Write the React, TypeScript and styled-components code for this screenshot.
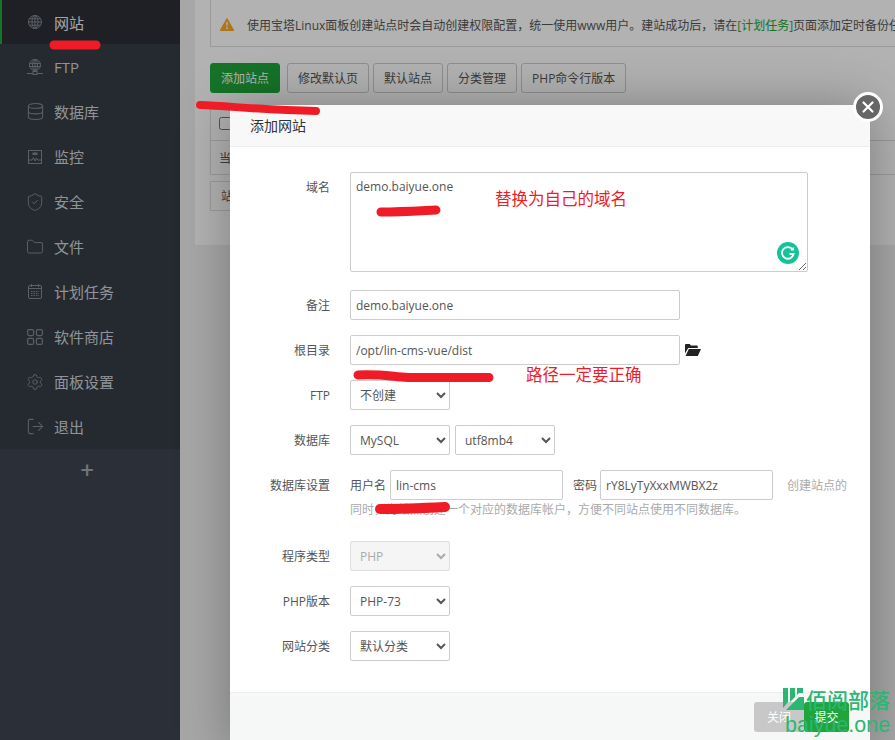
import { FC, ReactNode } from 'react';
import styled, { createGlobalStyle } from 'styled-components';
import { Database, Folder, LogOut, Settings, ShieldCheck } from 'lucide-react';

const FONT = '"Open Sans", "Noto Sans CJK SC", sans-serif';

const GlobalStyle = createGlobalStyle`
  html, body {
    margin: 0;
    padding: 0;
    width: 895px;
    height: 740px;
    overflow: hidden;
    font-family: ${FONT};
    font-size: 12px;
    color: #555;
  }
  * {
    box-sizing: border-box;
  }
`;

const GlobeIcon = () => (
  <svg width="14" height="14" viewBox="0 0 14 14" fill="none" stroke="currentColor" strokeWidth="1">
    <circle cx="7" cy="7" r="6.500" />
    <ellipse cx="7" cy="7" rx="3" ry="6.500" />
    <path d="M7 .5v13M1.500 3.800h11M.5 7h13M1.500 10.200h11" />
  </svg>
);

const FtpIcon = () => (
  <svg width="16" height="16" viewBox="0 0 16 16" fill="none" stroke="currentColor" strokeWidth="1">
    <circle cx="8" cy="6" r="5.500" />
    <ellipse cx="8" cy="6" rx="2.500" ry="5.500" />
    <path d="M2.500 4.500h11M2.500 7.500h11M8 .5v11M0 14.500h6M10 14.500h6" />
    <rect x="6" y="12.500" width="4" height="3" />
  </svg>
);

const MonitorIcon = () => (
  <svg width="14" height="14" viewBox="0 0 14 14" fill="none" stroke="currentColor" strokeWidth="1">
    <rect x=".5" y=".5" width="13" height="13" />
    <path d="M1 10h3l1.500-2.500L7 11l1.500-3 1 2H13" />
    <rect x="4.500" y="2.500" width="5" height="2.500" fill="currentColor" stroke="none" />
  </svg>
);

const CalendarIcon = () => (
  <svg width="14" height="15" viewBox="0 0 14 15" fill="none" stroke="currentColor" strokeWidth="1">
    <rect x=".5" y="1.500" width="13" height="13" rx="1.500" />
    <path d="M3.500 0v3M10.500 0v3M.5 4.500h13" />
    <path d="M3 7.500h8M3 9.500h8M3 11.500h8" strokeDasharray="1.500 1" />
  </svg>
);

const GridIcon = () => (
  <svg width="16" height="16" viewBox="0 0 16 16" fill="none" stroke="currentColor" strokeWidth="1.200">
    <rect x=".6" y=".6" width="6" height="6" rx="1.500" />
    <rect x="9.400" y=".6" width="6" height="6" rx="1.500" />
    <rect x=".6" y="9.400" width="6" height="6" rx="1.500" />
    <rect x="9.400" y="9.400" width="6" height="6" rx="1.500" />
  </svg>
);

const WarningIcon = () => (
  <svg width="14" height="13" viewBox="0 0 14 13">
    <path d="M7 .5l6.800 12H.2z" fill="#f9a825" stroke="#f9a825" strokeLinejoin="round" />
    <path d="M6.200 4h1.600l-.3 4.500h-1zM6.200 9.500h1.600v1.600H6.200z" fill="#fff" />
  </svg>
);

const FolderOpenIcon = () => (
  <svg width="16" height="12" viewBox="0 0 16 12" fill="#222">
    <path d="M0 1.200C0 .5.500 0 1.200 0h3.600l1 1.500h5.900c.6 0 1 .4 1 1V4H3.200L0 9.500z" />
    <path d="M3.800 5H16l-3.200 7H.6z" />
  </svg>
);

const navItems: { label: string; icon: ReactNode; active?: boolean }[] = [
  { label: '网站', icon: <GlobeIcon />, active: true },
  { label: 'FTP', icon: <FtpIcon /> },
  { label: '数据库', icon: <Database size={19} strokeWidth={1.300} /> },
  { label: '监控', icon: <MonitorIcon /> },
  { label: '安全', icon: <ShieldCheck size={20} strokeWidth={1.200} /> },
  { label: '文件', icon: <Folder size={18} strokeWidth={1.300} /> },
  { label: '计划任务', icon: <CalendarIcon /> },
  { label: '软件商店', icon: <GridIcon /> },
  { label: '面板设置', icon: <Settings size={18} strokeWidth={1.300} /> },
  { label: '退出', icon: <LogOut size={19} strokeWidth={1.300} /> },
];

const toolbarButtons = ['修改默认页', '默认站点', '分类管理', 'PHP命令行版本'];

const Field: FC<{ label: string; children: ReactNode }> = ({ label, children }) => (
  <Row>
    <RowLabel>{label}</RowLabel>
    <RowControls>{children}</RowControls>
  </Row>
);

const App: FC = () => (
  <Page>
    <GlobalStyle />
    <Sidebar>
      {navItems.map(item => (
        <NavItem key={item.label} $active={item.active}>
          <NavIcon>{item.icon}</NavIcon>
          {item.label}
        </NavItem>
      ))}
      <AddMenu>+</AddMenu>
    </Sidebar>
    <Main>
      <Panel>
        <Notice>
          <WarningIcon />
          <span>
            使用宝塔Linux面板创建站点时会自动创建权限配置，统一使用www用户。建站成功后，请在
            <NoticeLink>[计划任务]</NoticeLink>页面添加定时备份任务。
          </span>
        </Notice>
        <Toolbar>
          <Button $primary>添加站点</Button>
          {toolbarButtons.map(text => (
            <Button key={text}>{text}</Button>
          ))}
        </Toolbar>
        <SiteTable>
          <TableRow $height={34} $width={700}>
            <input type="checkbox" />
          </TableRow>
          <TableRow $height={34} $width={700}>当前</TableRow>
          <SiteRow $height={30} $width={400}>站点</SiteRow>
        </SiteTable>
      </Panel>
    </Main>

    <Shade />

    <Modal>
      <ModalHeader>添加网站</ModalHeader>
      <CloseButton aria-label="关闭">
        <svg width="14" height="14" viewBox="0 0 14 14" stroke="#fff" strokeWidth="2.200" strokeLinecap="round">
          <path d="M2.500 2.500l9 9M11.500 2.500l-9 9" />
        </svg>
      </CloseButton>
      <ModalBody>
        <TextareaRow>
          <RowLabel>域名</RowLabel>
          <Domain readOnly defaultValue="demo.baiyue.one" />
          <GrammarlyBadge>
            <svg width="22" height="22" viewBox="0 0 22 22">
              <circle cx="11" cy="11" r="11" fill="#15c39a" />
              <path d="M15.500 7.500a5.800 5.800 0 1 0 1 4.500h-4" fill="none" stroke="#fff" strokeWidth="1.800" />
              <path d="M14 7.800h2.300V5.500" fill="none" stroke="#fff" strokeWidth="1.500" />
            </svg>
          </GrammarlyBadge>
        </TextareaRow>
        <Field label="备注">
          <TextInput $width={330} readOnly defaultValue="demo.baiyue.one" />
        </Field>
        <Field label="根目录">
          <TextInput $width={330} readOnly defaultValue="/opt/lin-cms-vue/dist" />
          <FolderButton>
            <FolderOpenIcon />
          </FolderButton>
        </Field>
        <Field label="FTP">
          <Select $width={100} defaultValue="不创建">
            <option>不创建</option>
          </Select>
        </Field>
        <Field label="数据库">
          <Select $width={100} defaultValue="MySQL">
            <option>MySQL</option>
          </Select>
          <Select $width={100} defaultValue="utf8mb4">
            <option>utf8mb4</option>
          </Select>
        </Field>
        <DatabaseRow>
          <RowLabel>数据库设置</RowLabel>
          <DatabaseText>
            用户名
            <InlineInput $width={173} readOnly defaultValue="lin-cms" />
            <PasswordLabel>密码</PasswordLabel>
            <InlineInput $width={173} readOnly defaultValue="rY8LyTyXxxMWBX2z" />
            <Hint>创建站点的同时，为站点创建一个对应的数据库帐户，方便不同站点使用不同数据库。</Hint>
          </DatabaseText>
        </DatabaseRow>
        <Field label="程序类型">
          <Select $width={100} disabled defaultValue="PHP">
            <option>PHP</option>
          </Select>
        </Field>
        <Field label="PHP版本">
          <Select $width={100} defaultValue="PHP-73">
            <option>PHP-73</option>
          </Select>
        </Field>
        <Field label="网站分类">
          <Select $width={100} defaultValue="默认分类">
            <option>默认分类</option>
          </Select>
        </Field>
      </ModalBody>
      <ModalFooter>
        <CloseAction>关闭</CloseAction>
        <SubmitAction>提交</SubmitAction>
      </ModalFooter>
    </Modal>

    {/* hand drawn marks put on top of the screenshot */}
    <Marks width="895" height="740" viewBox="0 0 895 740">
      <g fill="none" stroke="#ef1c27" strokeLinecap="round">
        <path d="M54 45h42" strokeWidth="9" />
        <path d="M200 105c30 1 60 5 116 6" strokeWidth="8" />
        <path d="M381 212c20 0 35-1 55-2" strokeWidth="9" />
        <path d="M358 375c20-1 30 1 50 2.500h81" strokeWidth="9" />
        <path d="M380 509c25 0 45-1 65-2" strokeWidth="10" />
      </g>
    </Marks>
    <RedNote $left={495} $top={187}>替换为自己的域名</RedNote>
    <RedNote $left={526} $top={363}>路径一定要正确</RedNote>

    <Watermark>
      <WatermarkTop>
        <svg width="21" height="23" viewBox="0 0 21 23">
          <path d="M0 0h5v14L0 20zM7 0h5v9l-5 5zM14 0h6v5h-4l-2 2zM9 16l7-7h5v13H3z" fill="#2bb673" />
        </svg>
        佰阅部落
      </WatermarkTop>
      <WatermarkDomain>baiyue.one</WatermarkDomain>
    </Watermark>
  </Page>
);

const Page = styled.div`
  position: relative;
  display: flex;
  width: 895px;
  height: 740px;
  overflow: hidden;
  background: #f0f0f0;
`;

const Sidebar = styled.nav`
  flex: 0 0 180px;
  display: flex;
  flex-direction: column;
  background: #3c444d;
`;

const NavItem = styled.div<{ $active?: boolean }>`
  display: flex;
  align-items: center;
  height: ${p => (p.$active ? '44px' : '45px')};
  padding-left: ${p => (p.$active ? '25px' : '27px')};
  font-size: 15px;
  color: ${p => (p.$active ? '#eee' : '#cfd3d8')};
  background: ${p => (p.$active ? '#2c2f35' : '#363d47')};
  border-left: ${p => (p.$active ? '2px solid #20a53a' : '0')};
`;

const NavIcon = styled.span`
  display: flex;
  align-items: center;
  justify-content: center;
  width: 16px;
  height: 20px;
  margin-right: 11px;
  color: #848a92;
  svg {
    flex-shrink: 0;
  }
`;

const AddMenu = styled.div`
  flex: 1;
  padding: 6px 6px 0 0;
  text-align: center;
  font-size: 24px;
  line-height: 30px;
  font-weight: 600;
  color: #a0a6ac;
  background: #3e444f;
`;

const Main = styled.main`
  flex: 1;
  min-width: 0;
  padding: 0 0 0 15px;
`;

const Panel = styled.section`
  height: 245px;
  padding: 0 15px;
  background: #fff;
`;

const Notice = styled.div`
  display: flex;
  align-items: center;
  gap: 13px;
  width: 700px;
  height: 47px;
  padding: 3px 0 0 9px;
  white-space: nowrap;
  overflow: hidden;
  background: #fff;
  border: 1px solid #ddd;
  border-top: 0;
  color: #555;
  svg {
    flex-shrink: 0;
  }
`;

const NoticeLink = styled.span`
  color: #20a53a;
`;

const Toolbar = styled.div`
  display: flex;
  gap: 4px;
  margin-top: 16px;
`;

const Button = styled.div<{ $primary?: boolean }>`
  display: flex;
  align-items: center;
  justify-content: center;
  height: 30px;
  padding: 0 10px;
  margin-right: ${p => (p.$primary ? '3px' : '0')};
  border: 1px solid ${p => (p.$primary ? '#20a53a' : '#ccc')};
  border-radius: 3px;
  background: ${p => (p.$primary ? '#20a53a' : '#fff')};
  color: ${p => (p.$primary ? '#fff' : '#555')};
`;

const SiteTable = styled.div`
  margin-top: 14px;
`;

const TableRow = styled.div<{ $height: number; $width: number }>`
  display: flex;
  align-items: center;
  width: ${p => p.$width}px;
  height: ${p => p.$height}px;
  padding-left: 8px;
  border: 1px solid #ddd;
  border-top: 0;
  border-right: 0;
  input {
    margin: 0;
  }
`;

const SiteRow = styled(TableRow)`
  margin-top: 6px;
  padding-left: 10px;
  border-top: 1px solid #ddd;
`;

const Shade = styled.div`
  position: absolute;
  inset: 0;
  background: rgba(0, 0, 0, 0.3);
`;

const Modal = styled.div`
  position: absolute;
  top: 105px;
  left: 230px;
  display: flex;
  flex-direction: column;
  width: 640px;
  background: #fff;
  box-shadow: 1px 1px 50px rgba(0, 0, 0, 0.3);
`;

const ModalHeader = styled.div`
  height: 42px;
  padding-left: 20px;
  line-height: 42px;
  font-size: 14px;
  color: #333;
  background: #f8f8f8;
  border-bottom: 1px solid #eee;
`;

const CloseButton = styled.div`
  position: absolute;
  top: -13px;
  right: -13px;
  display: flex;
  align-items: center;
  justify-content: center;
  width: 30px;
  height: 30px;
  border: 3px solid #fff;
  border-radius: 50%;
  background: #666;
`;

const ModalBody = styled.div`
  height: 545px;
  padding-top: 25px;
`;

const Row = styled.div`
  display: flex;
  margin-bottom: 15px;
`;

const TextareaRow = styled(Row)`
  position: relative;
  margin-bottom: 18px;
`;

const DatabaseRow = styled(Row)`
  height: 56px;
`;

const RowLabel = styled.label`
  flex: 0 0 100px;
  height: 30px;
  margin-right: 20px;
  text-align: right;
  line-height: 32px;
  color: #555;
`;

const RowControls = styled.div`
  display: flex;
  align-items: center;
  gap: 5px;
`;

const Domain = styled.textarea`
  width: 458px;
  height: 100px;
  padding: 5px;
  resize: both;
  outline: 0;
  font-family: ${FONT};
  font-size: 12px;
  line-height: 18px;
  color: #555;
  border: 1px solid #ccc;
  border-radius: 2px;
`;

const GrammarlyBadge = styled.span`
  position: absolute;
  top: 70px;
  left: 547px;
  display: flex;
`;

const TextInput = styled.input<{ $width: number }>`
  width: ${p => p.$width}px;
  height: 30px;
  padding: 0 5px;
  outline: 0;
  font-family: ${FONT};
  font-size: 12px;
  color: #555;
  border: 1px solid #ccc;
  border-radius: 2px;
`;

const InlineInput = styled(TextInput)`
  margin-left: 4px;
`;

const FolderButton = styled.span`
  display: flex;
`;

const Select = styled.select<{ $width: number }>`
  width: ${p => p.$width}px;
  height: 30px;
  padding: 0 5px;
  outline: 0;
  font-family: ${FONT};
  font-size: 12px;
  color: #555;
  background: #fff;
  border: 1px solid #ccc;
  border-radius: 2px;
  &:disabled {
    color: #aaa;
    background: #f5f5f5;
    border-color: #ddd;
    opacity: 1;
  }
`;

const DatabaseText = styled.div`
  width: 500px;
  line-height: 20px;
  color: #555;
`;

const PasswordLabel = styled.span`
  margin: 0 -1px 0 10px;
`;

const Hint = styled.span`
  margin-left: 14px;
  color: #aaa;
`;

const ModalFooter = styled.div`
  display: flex;
  justify-content: flex-end;
  height: 60px;
  padding: 9px 21px 0 0;
  background: #f6f8f8;
  border-top: 1px solid #eee;
`;

const CloseAction = styled.div`
  display: flex;
  align-items: center;
  justify-content: center;
  width: 50px;
  height: 30px;
  color: #fff;
  background: #c8c8c8;
  border-radius: 3px;
`;

const SubmitAction = styled(CloseAction)`
  width: 45px;
  background: #20a53a;
`;

const Marks = styled.svg`
  position: absolute;
  top: 0;
  left: 0;
  pointer-events: none;
`;

const RedNote = styled.span<{ $left: number; $top: number }>`
  position: absolute;
  left: ${p => p.$left}px;
  top: ${p => p.$top}px;
  font-size: 16.5px;
  line-height: 24px;
  color: #ef1c27;
  white-space: nowrap;
`;

const Watermark = styled.div`
  position: absolute;
  left: 783px;
  top: 686px;
  color: #2bb673;
  pointer-events: none;
`;

const WatermarkTop = styled.div`
  display: flex;
  align-items: center;
  gap: 2px;
  height: 26px;
  font-size: 21px;
  font-weight: 500;
  white-space: nowrap;
`;

const WatermarkDomain = styled.div`
  margin-left: 2px;
  font-family: "Liberation Sans", sans-serif;
  font-size: 21.5px;
  line-height: 26px;
  white-space: nowrap;
`;

export default App;
